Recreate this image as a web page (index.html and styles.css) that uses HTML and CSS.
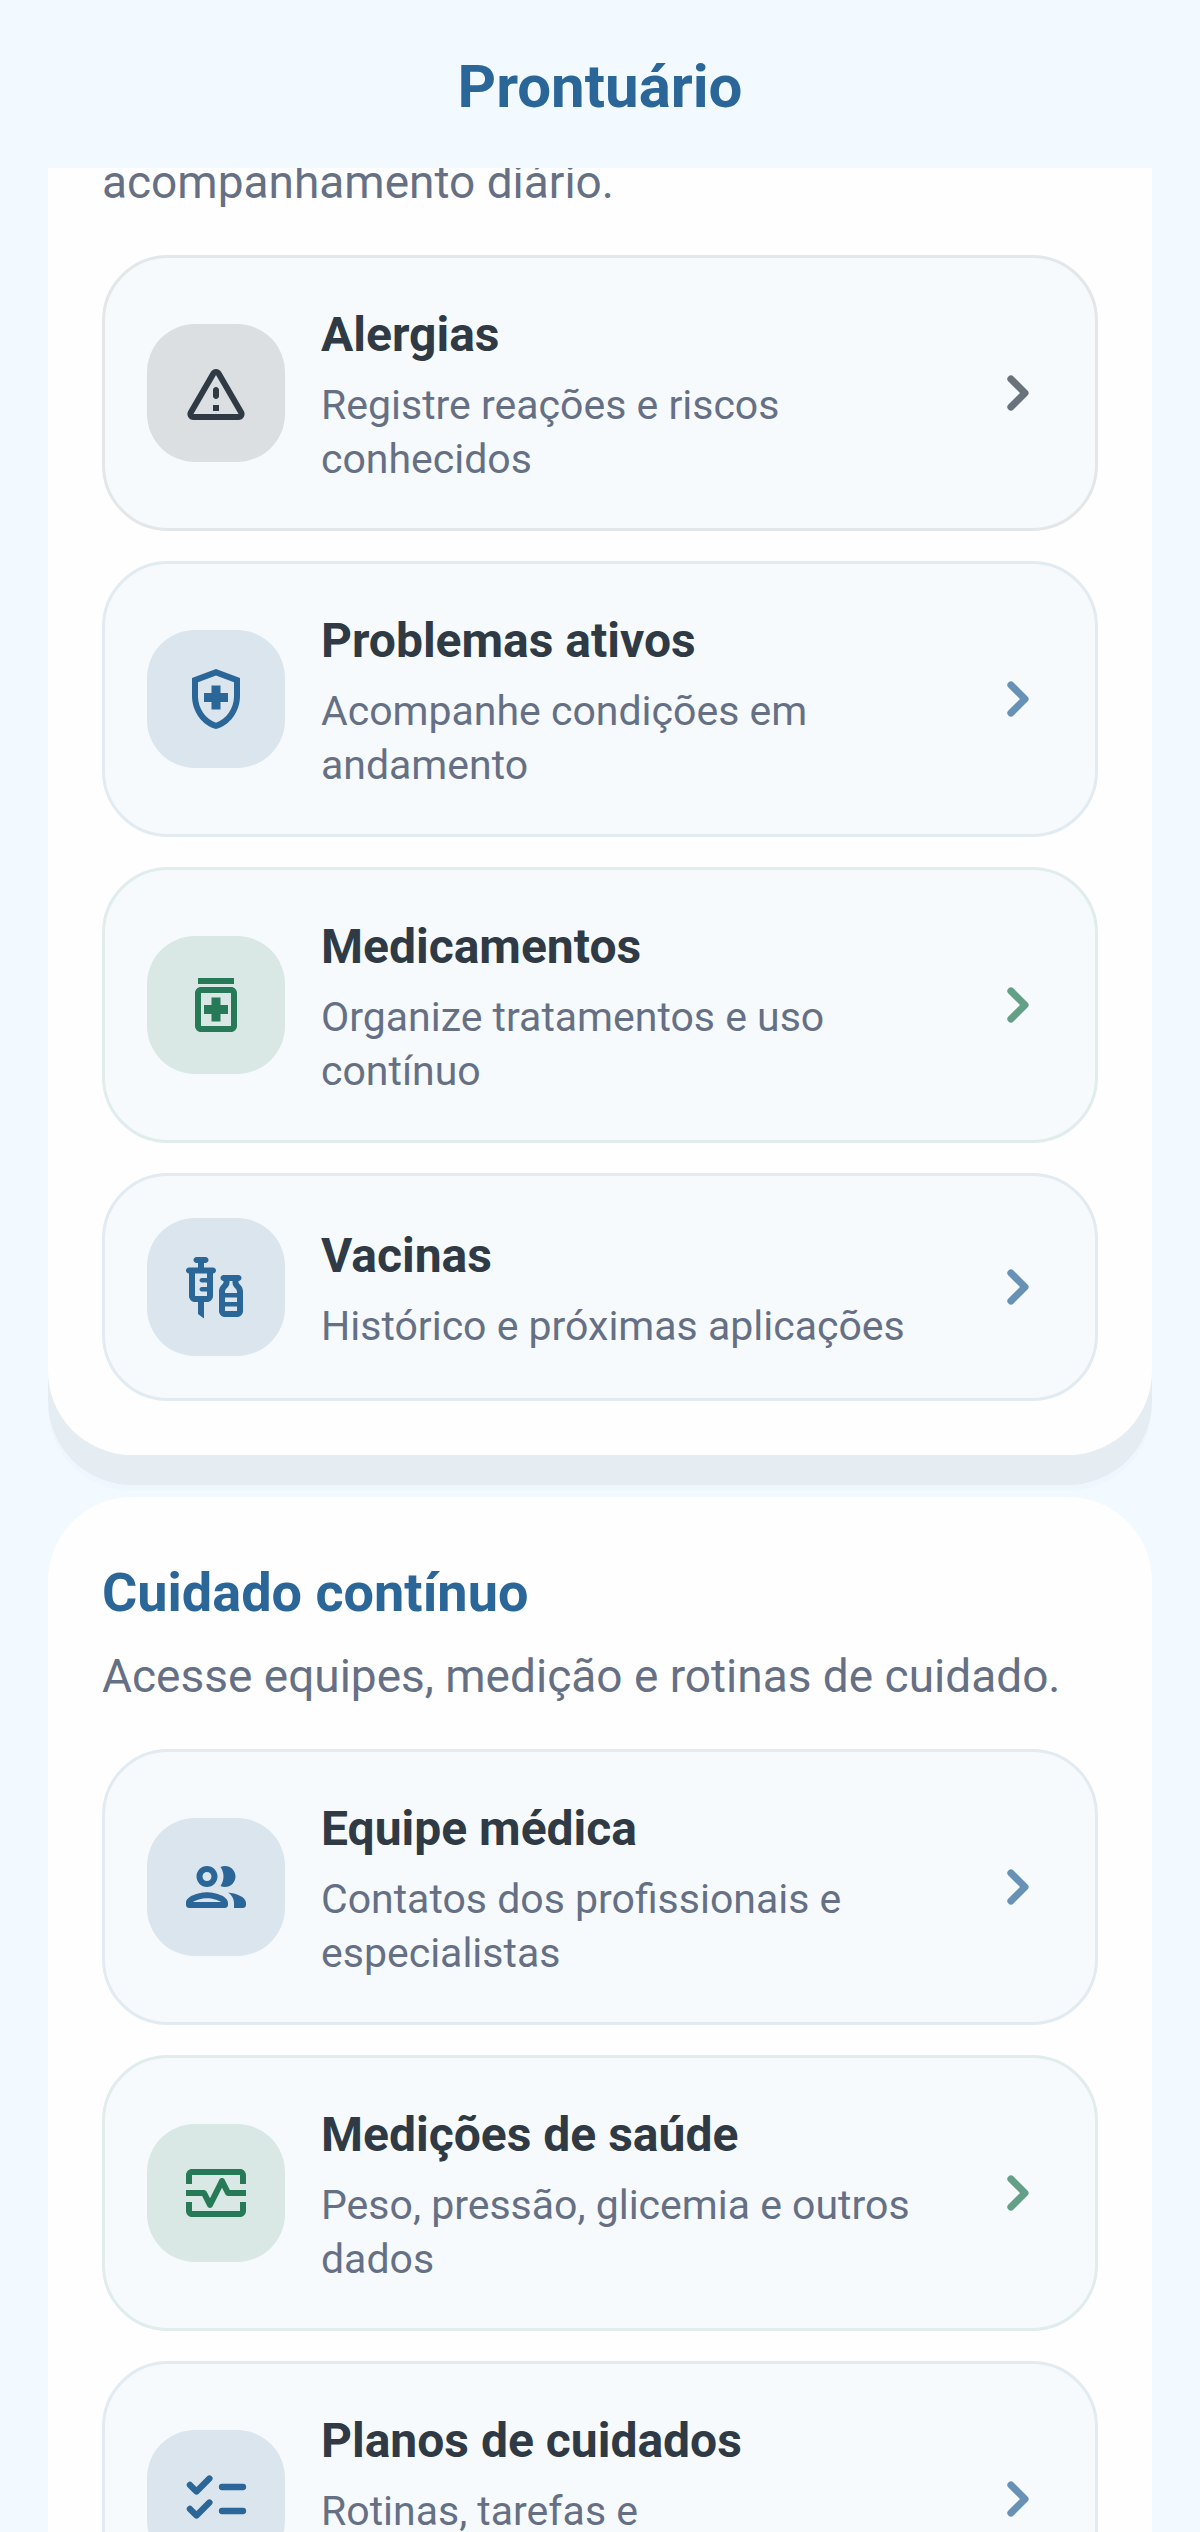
FILE: index.html
```
<!DOCTYPE html>
<html lang="pt-BR">
<head>
  <meta charset="UTF-8" />
  <meta name="viewport" content="width=device-width, initial-scale=1.0"/>
  <title>Prontuário</title>
  <link rel="stylesheet" href="styles.css">
</head>
<body>
  <!-- shared icons -->
  <svg class="sprite" aria-hidden="true">
    <symbol id="chevron" viewBox="0 0 24 24">
      <path d="M8.7 6.9l5.1 5.1-5.1 5.1" fill="none" stroke="currentColor" stroke-width="2.6" stroke-linecap="round" stroke-linejoin="round"/>
    </symbol>
  </svg>

  <header class="topbar">
    <h1>Prontuário</h1>
  </header>

  <main class="content">
    <section class="panel panel-scrolled">
      <p class="panel-text">acompanhamento diário.</p>

      <div class="item-list">
        <a href="#alergias" class="item dark">
          <span class="item-icon">
            <svg viewBox="0 0 24 24"><path d="M12 5.99 19.53 19H4.47L12 5.99M2.74 18c-.77 1.33.19 3 1.73 3h15.06c1.54 0 2.5-1.67 1.73-3L13.73 4.99c-.77-1.33-2.69-1.33-3.46 0L2.74 18zM11 11v2c0 .55.45 1 1 1s1-.45 1-1v-2c0-.55-.45-1-1-1s-1 .45-1 1zm0 5h2v2h-2z"/></svg>
          </span>
          <span class="item-body">
            <strong>Alergias</strong>
            <span class="item-desc">Registre reações e riscos conhecidos</span>
          </span>
          <svg class="chevron"><use href="#chevron"/></svg>
        </a>

        <a href="#problemas" class="item blue">
          <span class="item-icon">
            <svg viewBox="0 0 24 24"><path d="M10.5 13H8v-3h2.5V7.5h3V10H16v3h-2.5v2.5h-3V13zM12 2 4 5v6.09c0 5.05 3.41 9.76 8 10.91 4.59-1.15 8-5.86 8-10.91V5l-8-3zm6 9.09c0 4-2.55 7.7-6 8.83-3.45-1.13-6-4.82-6-8.83v-4.7l6-2.25 6 2.25v4.7z"/></svg>
          </span>
          <span class="item-body">
            <strong>Problemas ativos</strong>
            <span class="item-desc">Acompanhe condições em andamento</span>
          </span>
          <svg class="chevron"><use href="#chevron"/></svg>
        </a>

        <a href="#medicamentos" class="item green">
          <span class="item-icon">
            <svg viewBox="0 0 24 24"><path d="M10.5 15H8v-3h2.5V9.5h3V12H16v3h-2.5v2.5h-3V15zM19 8v11c0 1.1-.9 2-2 2H7c-1.1 0-2-.9-2-2V8c0-1.1.9-2 2-2h10c1.1 0 2 .9 2 2zm-2 0H7v11h10V8zm1-5H6v2h12V3z"/></svg>
          </span>
          <span class="item-body">
            <strong>Medicamentos</strong>
            <span class="item-desc">Organize tratamentos e uso contínuo</span>
          </span>
          <svg class="chevron"><use href="#chevron"/></svg>
        </a>

        <a href="#vacinas" class="item blue">
          <span class="item-icon">
            <svg viewBox="0 0 24 24"><path d="M11 5.5H8V4h.5c.55 0 1-.45 1-1s-.45-1-1-1h-3c-.55 0-1 .45-1 1s.45 1 1 1H6v1.5H3c-.55 0-1 .45-1 1s.45 1 1 1V15c0 1.1.9 2 2 2h1v4l2 1.5V17h1c1.1 0 2-.9 2-2V7.5c.55 0 1-.45 1-1s-.45-1-1-1zM9 9H7.25c-.41 0-.75.34-.75.75s.34.75.75.75H9V12H7.25c-.41 0-.75.34-.75.75s.34.75.75.75H9V15H5V7.5h4V9zm10.5 1.5V10c.55 0 1-.45 1-1s-.45-1-1-1h-5c-.55 0-1 .45-1 1s.45 1 1 1v.5c0 .5-1.5 1.16-1.5 3V20c0 1.1.9 2 2 2h4c1.1 0 2-.9 2-2v-6.5c0-1.84-1.5-2.5-1.5-3zm-3 0V10h1v.5c0 1.6 1.5 2 1.5 3V14h-4v-.5c0-1 1.5-1.4 1.5-3zm2.5 5V17h-4v-1.5h4zM15 20v-1.5h4V20h-4z"/></svg>
          </span>
          <span class="item-body">
            <strong>Vacinas</strong>
            <span class="item-desc">Histórico e próximas aplicações</span>
          </span>
          <svg class="chevron"><use href="#chevron"/></svg>
        </a>
      </div>
    </section>

    <section class="panel">
      <h2>Cuidado contínuo</h2>
      <p class="panel-text">Acesse equipes, medição e rotinas de cuidado.</p>

      <div class="item-list">
        <a href="#equipe" class="item blue">
          <span class="item-icon">
            <svg viewBox="0 0 24 24"><path d="M9 13.75c-2.34 0-7 1.17-7 3.5V18c0 .55.45 1 1 1h12c.55 0 1-.45 1-1v-.75c0-2.33-4.66-3.5-7-3.5zM4.34 17c.84-.58 2.87-1.25 4.66-1.25s3.82.67 4.66 1.25H4.34zM9 12c1.93 0 3.5-1.57 3.5-3.5S10.93 5 9 5 5.5 6.57 5.5 8.5 7.07 12 9 12zm0-5c.83 0 1.5.67 1.5 1.5S9.83 10 9 10s-1.5-.67-1.5-1.5S8.17 7 9 7zm7.04 6.81c1.16.84 1.96 1.96 1.96 3.44V19h3c.55 0 1-.45 1-1v-.75c0-2.02-3.5-3.17-5.96-3.44zM15 12c1.93 0 3.5-1.57 3.5-3.5S16.93 5 15 5c-.54 0-1.04.13-1.5.35.63.89 1 1.98 1 3.15s-.37 2.26-1 3.15c.46.22.96.35 1.5.35z"/></svg>
          </span>
          <span class="item-body">
            <strong>Equipe médica</strong>
            <span class="item-desc">Contatos dos profissionais e especialistas</span>
          </span>
          <svg class="chevron"><use href="#chevron"/></svg>
        </a>

        <a href="#medicoes" class="item green">
          <span class="item-icon">
            <svg viewBox="0 0 24 24"><path d="M20 4H4c-1.1 0-2 .9-2 2v3h2V6h16v3h2V6c0-1.1-.9-2-2-2zm0 14H4v-3H2v3c0 1.1.9 2 2 2h16c1.1 0 2-.9 2-2v-3h-2v3z"/><path d="M14.89 7.55c-.34-.68-1.45-.68-1.79 0L10 13.76l-1.11-2.21A.988.988 0 0 0 8 11H2v2h5.38l1.72 3.45c.18.34.52.55.9.55s.72-.21.89-.55L14 10.24l1.11 2.21c.17.34.51.55.89.55h6v-2h-5.38l-1.73-3.45z"/></svg>
          </span>
          <span class="item-body">
            <strong>Medições de saúde</strong>
            <span class="item-desc">Peso, pressão, glicemia e outros dados</span>
          </span>
          <svg class="chevron"><use href="#chevron"/></svg>
        </a>

        <a href="#planos" class="item blue">
          <span class="item-icon">
            <svg viewBox="0 0 24 24"><path d="M3.3 7.3l2.2 2.2 4.3-4.3M3.3 15.3l2.2 2.2 4.3-4.3M14 8h7M14 16h7" fill="none" stroke="currentColor" stroke-width="2.1" stroke-linecap="round" stroke-linejoin="round"/></svg>
          </span>
          <span class="item-body">
            <strong>Planos de cuidados</strong>
            <span class="item-desc two-lines">Rotinas, tarefas e</span>
          </span>
          <svg class="chevron"><use href="#chevron"/></svg>
        </a>
      </div>
    </section>
  </main>
</body>
</html>
```
FILE: styles.css
```
* {
  box-sizing: border-box;
}

html, body {
  margin: 0;
  padding: 0;
  background-color: #f2f9ff;
  font-family: Roboto, "Liberation Sans", sans-serif;
  color: #2f3a45;
}

html {
  scrollbar-width: none;
}

.sprite {
  display: none;
}

.topbar {
  position: sticky;
  top: 0;
  z-index: 2;
  display: flex;
  align-items: center;
  justify-content: center;
  height: 168px;
  padding-top: 6px;
  background-color: #f2f9ff;
}

h1 {
  margin: 0;
  font-size: 60px;
  line-height: 72px;
  font-weight: 700;
  color: #2b6698;
}

.content {
  display: flex;
  flex-direction: column;
  gap: 42px;
  padding: 0 48px 48px;
}

.panel {
  padding: 54px;
  border-radius: 84px;
  background-color: #fefefe;
  box-shadow: 0 30px 0 #e5ecf2, 0 36px 0 #eff7fe;
}

/* first panel sits partly under the top bar */
.panel-scrolled {
  margin-top: -17px;
  padding-top: 0;
  border-top-left-radius: 0;
  border-top-right-radius: 0;
}

h2 {
  margin: 0 0 10px;
  font-size: 54px;
  line-height: 84px;
  font-weight: 700;
  color: #2b6698;
}

.panel-text {
  margin: 0 0 42px;
  font-size: 46px;
  line-height: 62px;
  color: #667085;
}

.item-list {
  display: flex;
  flex-direction: column;
  gap: 30px;
}

.item {
  display: flex;
  align-items: center;
  gap: 36px;
  padding: 42px;
  border: 3px solid #e2ebf1;
  border-radius: 66px;
  background-color: #f6fafd;
  color: #2b6698;
  text-decoration: none;
}

.item-icon {
  flex: none;
  display: flex;
  align-items: center;
  justify-content: center;
  width: 138px;
  height: 138px;
  border-radius: 48px;
  background-color: #dae5ed;
}

.item-icon svg {
  width: 72px;
  height: 72px;
  fill: currentColor;
}

.item-body {
  flex: 1;
  min-width: 0;
  display: flex;
  flex-direction: column;
  gap: 8px;
}

.item-body strong {
  font-size: 48px;
  line-height: 70px;
  font-weight: 700;
  color: #2f3a45;
}

.item-desc {
  font-size: 41px;
  line-height: 54px;
  color: #667085;
}

.item-desc.two-lines {
  min-height: 108px;
}

.chevron {
  flex: none;
  width: 66px;
  height: 66px;
  opacity: 0.7;
}

.item.dark {
  border-color: #e3e7ea;
  color: #2f3a45;
}

.item.dark .item-icon {
  background-color: #dbdfe2;
}

.item.green {
  border-color: #e1ecec;
  color: #277a57;
}

.item.green .item-icon {
  background-color: #d9e8e4;
}
```
